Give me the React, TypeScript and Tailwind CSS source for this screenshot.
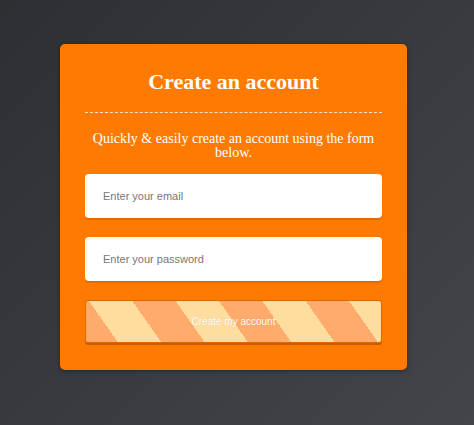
const SignupCard = () => {
  return (
    <div className="w-[347px] ml-[60px] mt-[44px] rounded-[5px] bg-[#ff7a00] px-[25px] pt-[25px] pb-[27px] shadow-[0_1px_4px_rgba(0,0,0,0.35)]">
      <h2 className="text-center text-[22px] leading-[26px] font-bold text-white font-['Liberation_Serif',serif]">
        Create an account
      </h2>
      <div className="mt-[17px] border-t border-dashed border-white/80" />
      <p className="mt-[19px] text-center text-[14px] leading-[14px] text-white font-['Liberation_Serif',serif]">
        Quickly &amp; easily create an account using the form below.
      </p>

      <form className="mt-[14px] flex flex-col gap-[19px]" onSubmit={(e) => e.preventDefault()}>
        <input
          type="email"
          placeholder="Enter your email"
          className="h-[44px] w-full rounded-[4px] bg-white pl-[18px] text-[11px] text-[#444] placeholder:text-[#777] shadow-[0_2px_0_rgba(0,0,0,0.12)] outline-none font-['Liberation_Sans',sans-serif]"
        />
        <input
          type="password"
          placeholder="Enter your password"
          className="h-[44px] w-full rounded-[4px] bg-white pl-[18px] text-[11px] text-[#444] placeholder:text-[#777] shadow-[0_2px_0_rgba(0,0,0,0.12)] outline-none font-['Liberation_Sans',sans-serif]"
        />
        <button
          type="submit"
          className="h-[43px] w-full rounded-[3px] border border-[#e06800] bg-[repeating-linear-gradient(55deg,#ffab6c_0px,#ffab6c_26px,#ffdd9e_26px,#ffdd9e_61.5px,#ffab6c_61.5px,#ffab6c_71px)] text-[10px] text-white shadow-[0_2px_0_rgba(170,70,0,0.6)] font-['Liberation_Sans',sans-serif] [text-shadow:0_0_1px_rgba(0,0,0,0.15)]"
        >
          Create my account
        </button>
      </form>
    </div>
  );
};

export default function App() {
  return (
    <div className="min-h-[425px] w-full overflow-hidden bg-[linear-gradient(135deg,#2c3033_0%,#373a3e_50%,#424549_100%)] pt-px">
      <div className="-mt-px">
        <SignupCard />
      </div>
    </div>
  );
}
